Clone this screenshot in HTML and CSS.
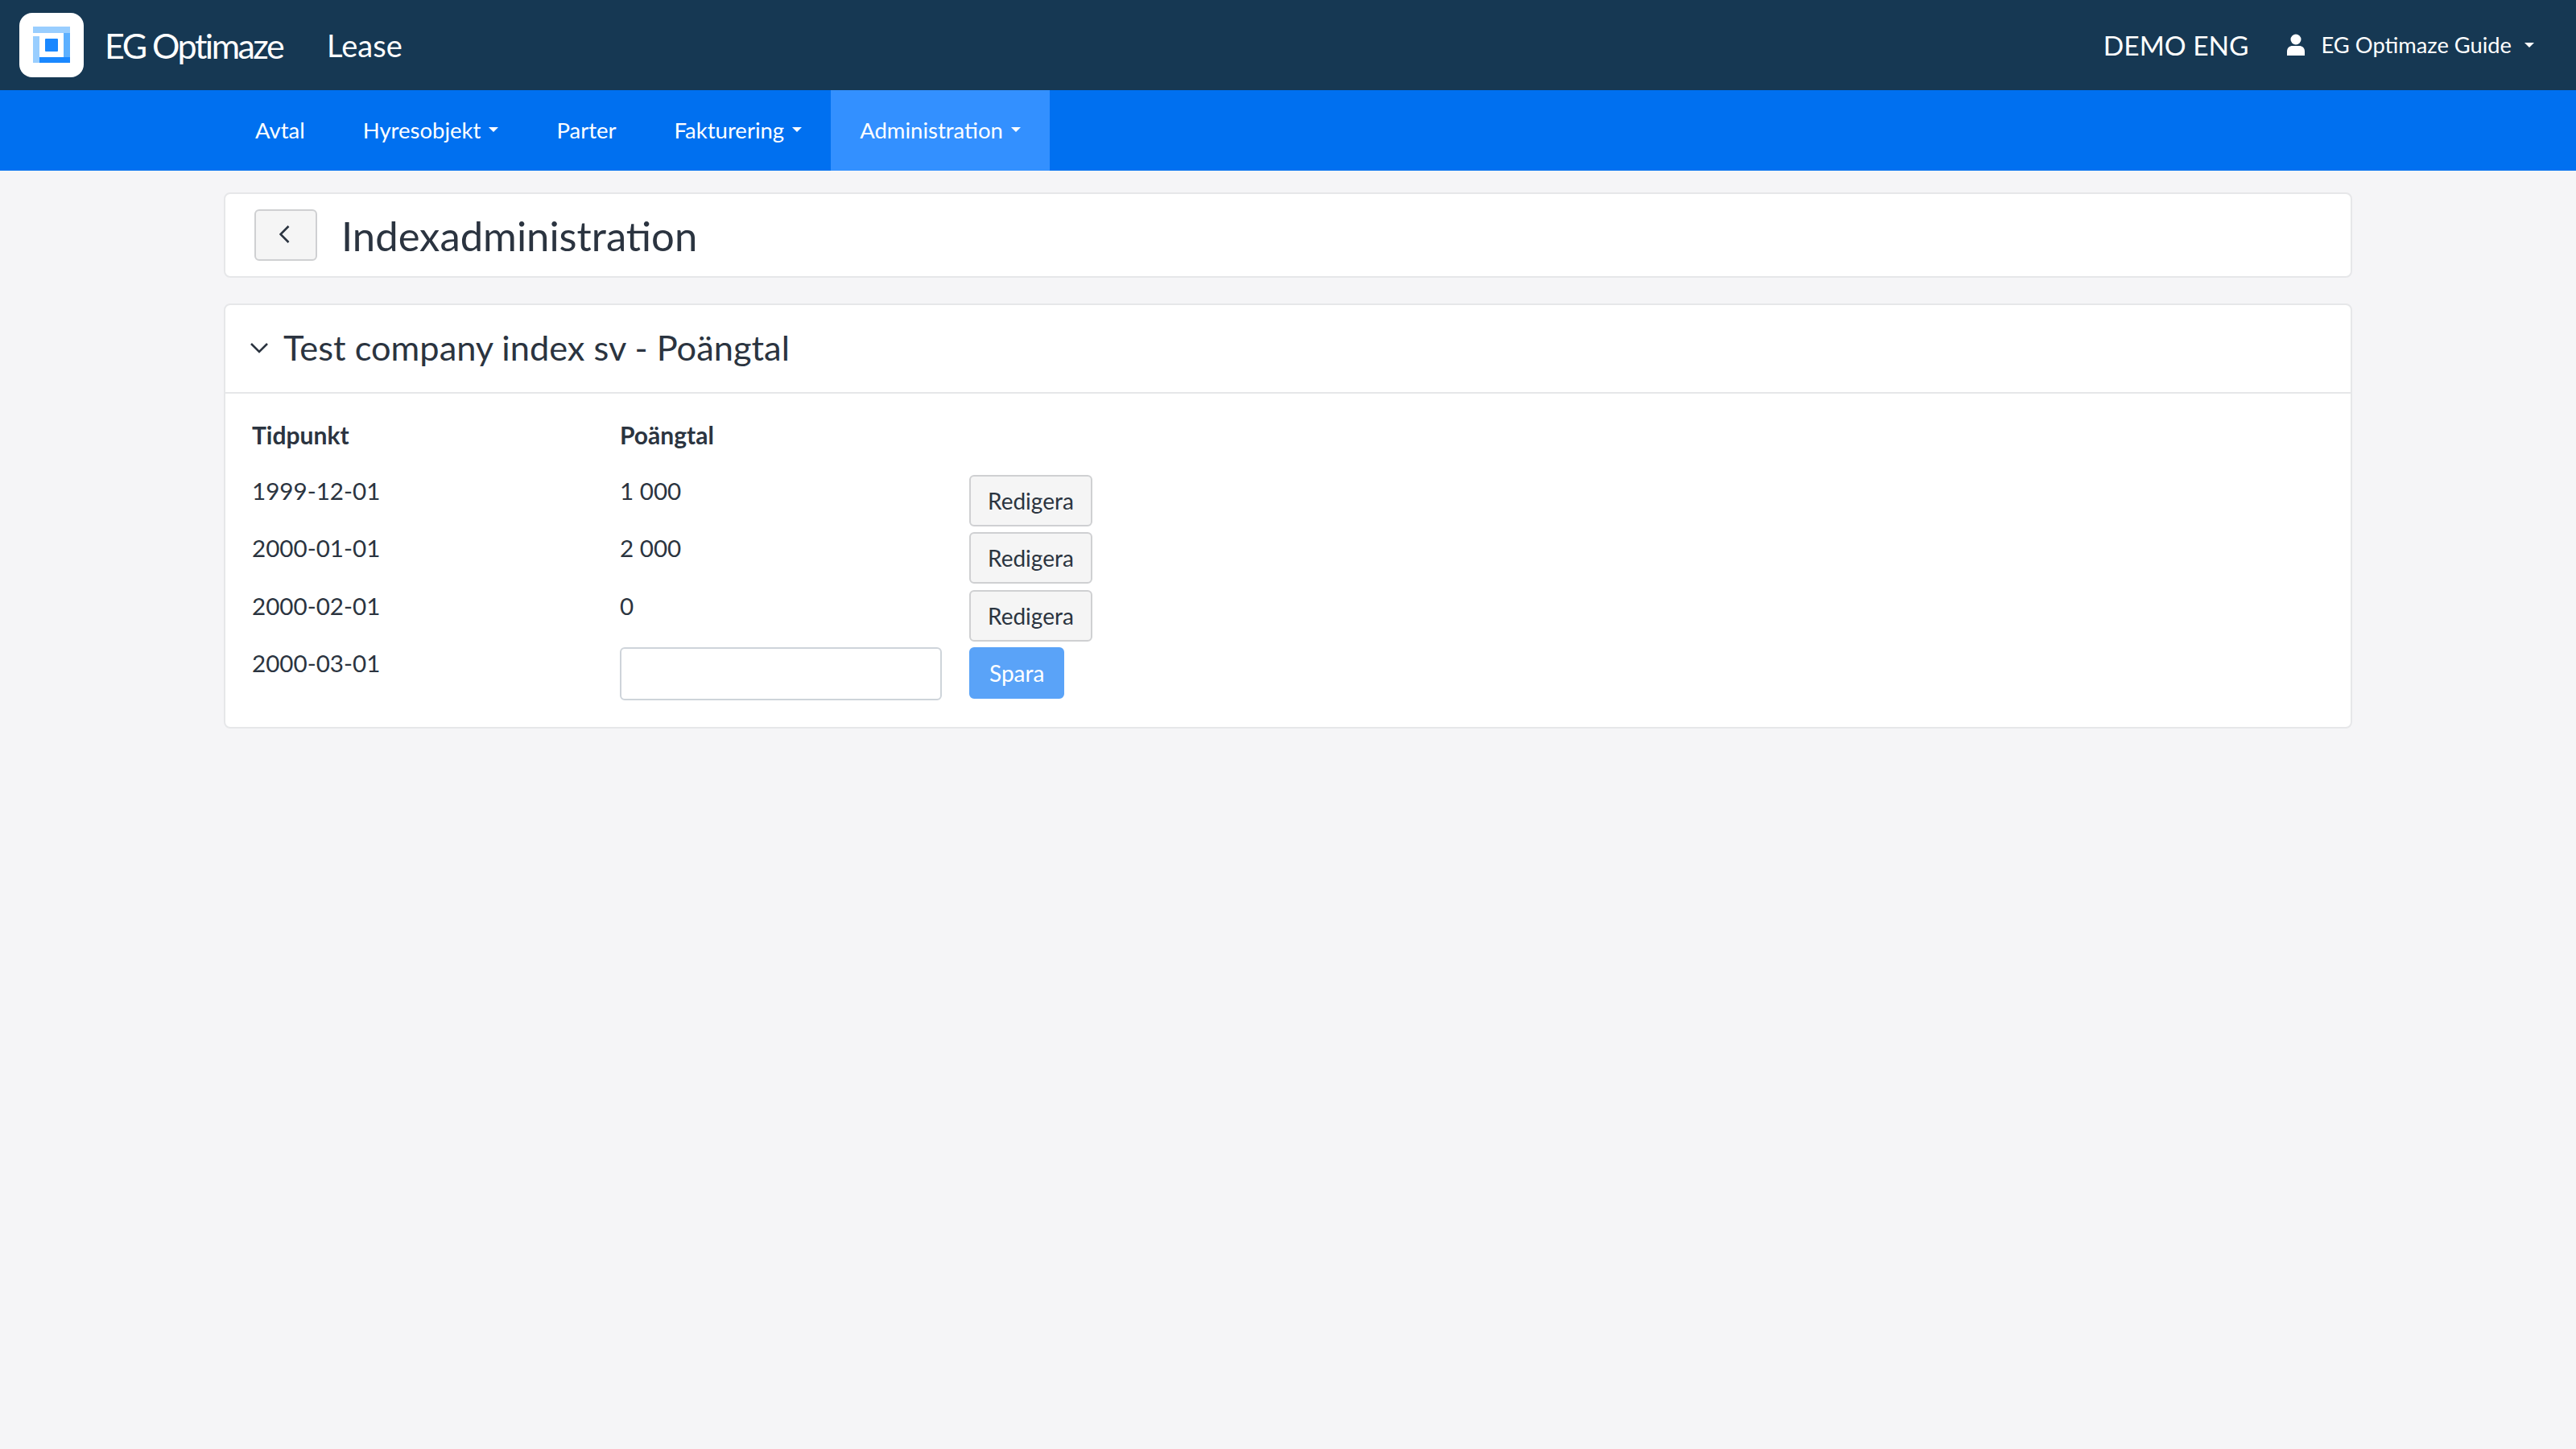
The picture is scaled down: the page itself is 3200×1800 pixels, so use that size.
FILE: index.html
```html
<!DOCTYPE html>
<html lang="sv">
<head>
  <meta charset="UTF-8">
  <title>Indexadministration</title>
  <link rel="stylesheet" href="styles.css">
</head>
<body>
  <header class="topbar">
    <div class="logo">
      <svg width="80" height="80" viewBox="0 0 80 80">
        <rect x="17" y="17" width="46" height="8" fill="#99ceff"/>
        <rect x="17" y="29" width="8" height="33" fill="#99ceff"/>
        <rect x="55" y="25" width="8" height="30" fill="#5cb0ff"/>
        <rect x="25" y="55" width="38" height="7" fill="#1a88ff"/>
        <rect x="32" y="32" width="16" height="16" rx="1" fill="#1a88ff"/>
      </svg>
    </div>
    <span class="brand">EG Optimaze</span>
    <span class="product">Lease</span>
    <span class="company">DEMO ENG</span>
    <div class="user">
      <svg width="24" height="28" viewBox="0 0 24 28">
        <circle cx="12" cy="7" r="6.5" fill="#fff"/>
        <path d="M1 27v-5c0-4.500 3-7 7-7h8c4 0 7 2.500 7 7v5z" fill="#fff"/>
      </svg>
      <span class="user-name">EG Optimaze Guide</span>
      <i class="caret"></i>
    </div>
  </header>

  <nav class="mainnav">
    <a class="nav-item">Avtal</a>
    <a class="nav-item">Hyresobjekt <i class="caret"></i></a>
    <a class="nav-item">Parter</a>
    <a class="nav-item">Fakturering <i class="caret"></i></a>
    <a class="nav-item active">Administration <i class="caret"></i></a>
  </nav>

  <main class="container">
    <section class="card page-head">
      <button class="btn btn-back">
        <svg width="16" height="24" viewBox="0 0 16 24"><path d="M11.500 2 1.500 12l10 10" fill="none" stroke="#2b3440" stroke-width="2.600"/></svg>
      </button>
      <h1>Indexadministration</h1>
    </section>

    <section class="card">
      <div class="card-head">
        <svg class="chevron" width="24" height="16" viewBox="0 0 24 16"><path d="m2 3 10 10L22 3" fill="none" stroke="#2b3440" stroke-width="2.600"/></svg>
        <h2>Test company index sv - Poängtal</h2>
      </div>
      <div class="card-body">
        <table class="index-table">
          <thead>
            <tr><th>Tidpunkt</th><th>Poängtal</th><th></th></tr>
          </thead>
          <tbody>
            <tr><td>1999-12-01</td><td>1 000</td><td><button class="btn">Redigera</button></td></tr>
            <tr><td>2000-01-01</td><td>2 000</td><td><button class="btn">Redigera</button></td></tr>
            <tr><td>2000-02-01</td><td>0</td><td><button class="btn">Redigera</button></td></tr>
            <tr><td>2000-03-01</td><td><input type="text" class="value-input"></td><td><button class="btn btn-save">Spara</button></td></tr>
          </tbody>
        </table>
      </div>
    </section>
  </main>
</body>
</html>
```

FILE: styles.css
```css
body {
  margin: 0;
  background-color: #f5f5f7;
  color: #2b3440;
  font-family: Lato, "Noto Sans", sans-serif;
  font-size: 30px;
}

.topbar {
  display: flex;
  align-items: center;
  height: 112px;
  padding: 0 52px 0 24px;
  background-color: #163853;
  color: #fff;
}

.logo {
  width: 80px;
  height: 80px;
  border-radius: 16px;
  background-color: #fff;
}

.brand {
  margin-left: 26px;
  font-size: 43px;
  letter-spacing: -2.500px;
}

.product {
  margin-left: 55px;
  font-size: 38px;
}

.company {
  margin-left: auto;
  font-size: 33.500px;
}

.user {
  display: flex;
  align-items: center;
  gap: 20px;
  margin-left: 46px;
  font-size: 27.300px;
}

.user-name {
  margin-top: -2px;
}

.user .caret {
  margin-left: -4px;
}

.caret {
  display: inline-block;
  width: 0;
  height: 0;
  border-top: 6px solid #fff;
  border-left: 6px solid transparent;
  border-right: 6px solid transparent;
  vertical-align: middle;
}

.mainnav {
  display: flex;
  height: 100px;
  padding-left: 281px;
  background-color: #0070f0;
  color: #fff;
  font-size: 27.500px;
}

.nav-item {
  display: flex;
  align-items: center;
  gap: 10px;
  padding: 0 36px 2px;
}

.nav-item.active {
  background-color: #3390ff;
}

.container {
  display: flex;
  flex-direction: column;
  gap: 32px;
  width: 2644px;
  margin: 27px auto 0;
}

.card {
  border: 2px solid #e6e7e9;
  border-radius: 8px;
  background-color: #fff;
}

.page-head {
  display: flex;
  align-items: center;
  gap: 30px;
  height: 102px;
  padding: 0 36px;
}

h1 {
  margin: 0;
  font-size: 50.800px;
  font-weight: 400;
}

h2 {
  margin: -4px 0 0;
  font-size: 43.400px;
  font-weight: 400;
}

.card-head {
  display: flex;
  align-items: center;
  gap: 18px;
  height: 108px;
  padding: 0 30px;
  border-bottom: 2px solid #e6e7e9;
}

.chevron {
  margin-top: -2px;
}

.card-body {
  padding: 33px 33px 27px;
}

.btn {
  display: block;
  height: 64px;
  padding: 0 21px;
  border: 2px solid #cfd0d2;
  border-radius: 6px;
  background-color: #f5f5f5;
  color: #2b3440;
  font-family: inherit;
  font-size: 28px;
}

.btn-back {
  width: 78px;
  padding: 0;
}

.btn-save {
  padding: 0 23px;
  border-color: #5aa3f8;
  background-color: #5aa3f8;
  color: #fff;
}

.index-table {
  border-collapse: collapse;
}

.index-table th {
  padding: 0 0 32px;
  font-weight: 700;
  text-align: left;
}

.index-table td {
  box-sizing: border-box;
  height: 71.400px;
  padding: 2px 0 0;
  font-size: 29.600px;
  vertical-align: top;
}

.index-table td:first-child {
  width: 457px;
}

.index-table td:nth-child(2) {
  width: 434px;
}

.index-table td:last-child {
  padding-top: 0;
}

.value-input {
  display: block;
  box-sizing: border-box;
  width: 400px;
  height: 66px;
  margin-top: -2px;
  border: 2px solid #ced4da;
  border-radius: 6px;
}
```
